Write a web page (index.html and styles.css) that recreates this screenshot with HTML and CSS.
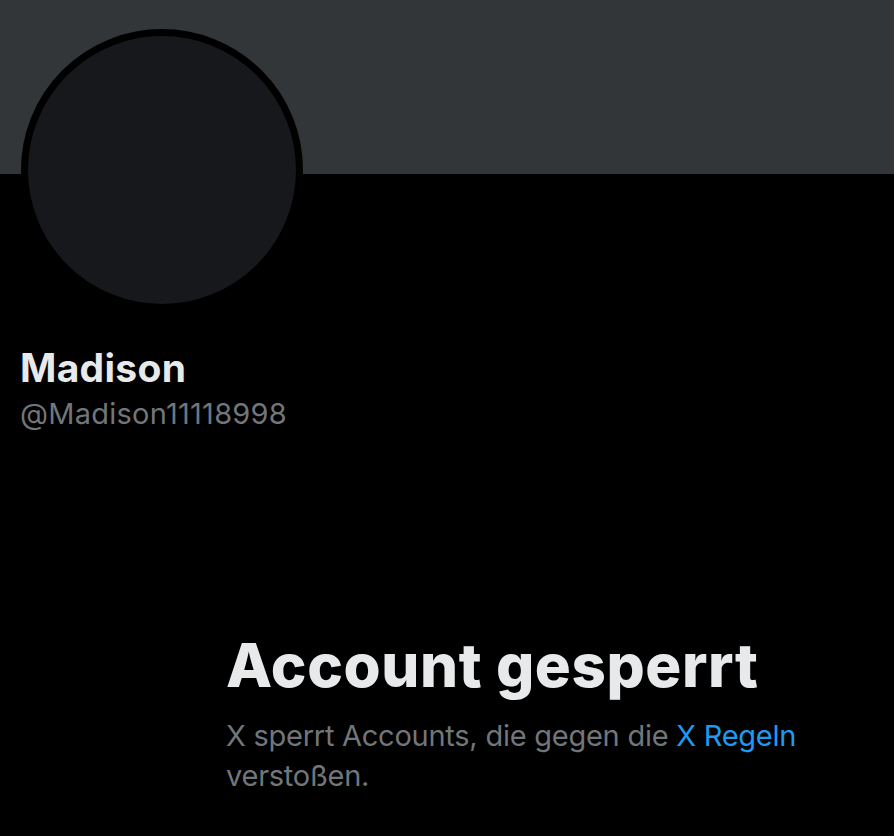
FILE: index.html
```html
<!DOCTYPE html>
<html lang="de">

<head>
  <meta charset="UTF-8">
  <meta name="viewport" content="width=device-width, initial-scale=1.0">
  <title>Madison (@Madison11118998) / X</title>

  <link rel="stylesheet" href="styles.css">
</head>

<body>
  <main>
    <div class="banner"></div>

    <section class="profile">
      <div class="avatar"></div>
      <h2 class="name">Madison</h2>
      <div class="handle">@Madison11118998</div>
    </section>

    <section class="notice">
      <h1 class="notice-title">Account gesperrt</h1>
      <p class="notice-text">
        X sperrt Accounts, die gegen die <a href="#">X Regeln</a> verstoßen.
      </p>
    </section>
  </main>
</body>

</html>
```

FILE: styles.css
```css
body {
  background: #000;
  color: #e7e9ea;
  font-family: "Inter", "Roboto", sans-serif;
  margin: 0;
}

main {
  width: 894px;
}

.banner {
  background: #333639;
  height: 174px;
}

.profile {
  padding: 0 20px;
}

.avatar {
  background: #16181c;
  border: 7px solid #000;
  border-radius: 50%;
  box-sizing: border-box;
  height: 282px;
  margin: -145px 0 0 1px;
  width: 282px;
}

.name {
  font-size: 39px;
  font-weight: 700;
  letter-spacing: 0.3px;
  line-height: 48px;
  margin: 33px 0 0;
}

.handle {
  color: #71767b;
  font-size: 29px;
  letter-spacing: 0.25px;
  line-height: 40px;
  margin-top: 2px;
}

.notice {
  padding: 195px 0 0 226px;
  width: 620px;
}

.notice-title {
  font-size: 60px;
  font-weight: 800;
  letter-spacing: 0.6px;
  line-height: 72px;
  margin: 0;
}

.notice-text {
  color: #71767b;
  font-size: 29px;
  letter-spacing: -0.25px;
  line-height: 40px;
  margin: 15px 0 0;
}

.notice-text a {
  color: #1d9bf0;
  text-decoration: none;
}
```
